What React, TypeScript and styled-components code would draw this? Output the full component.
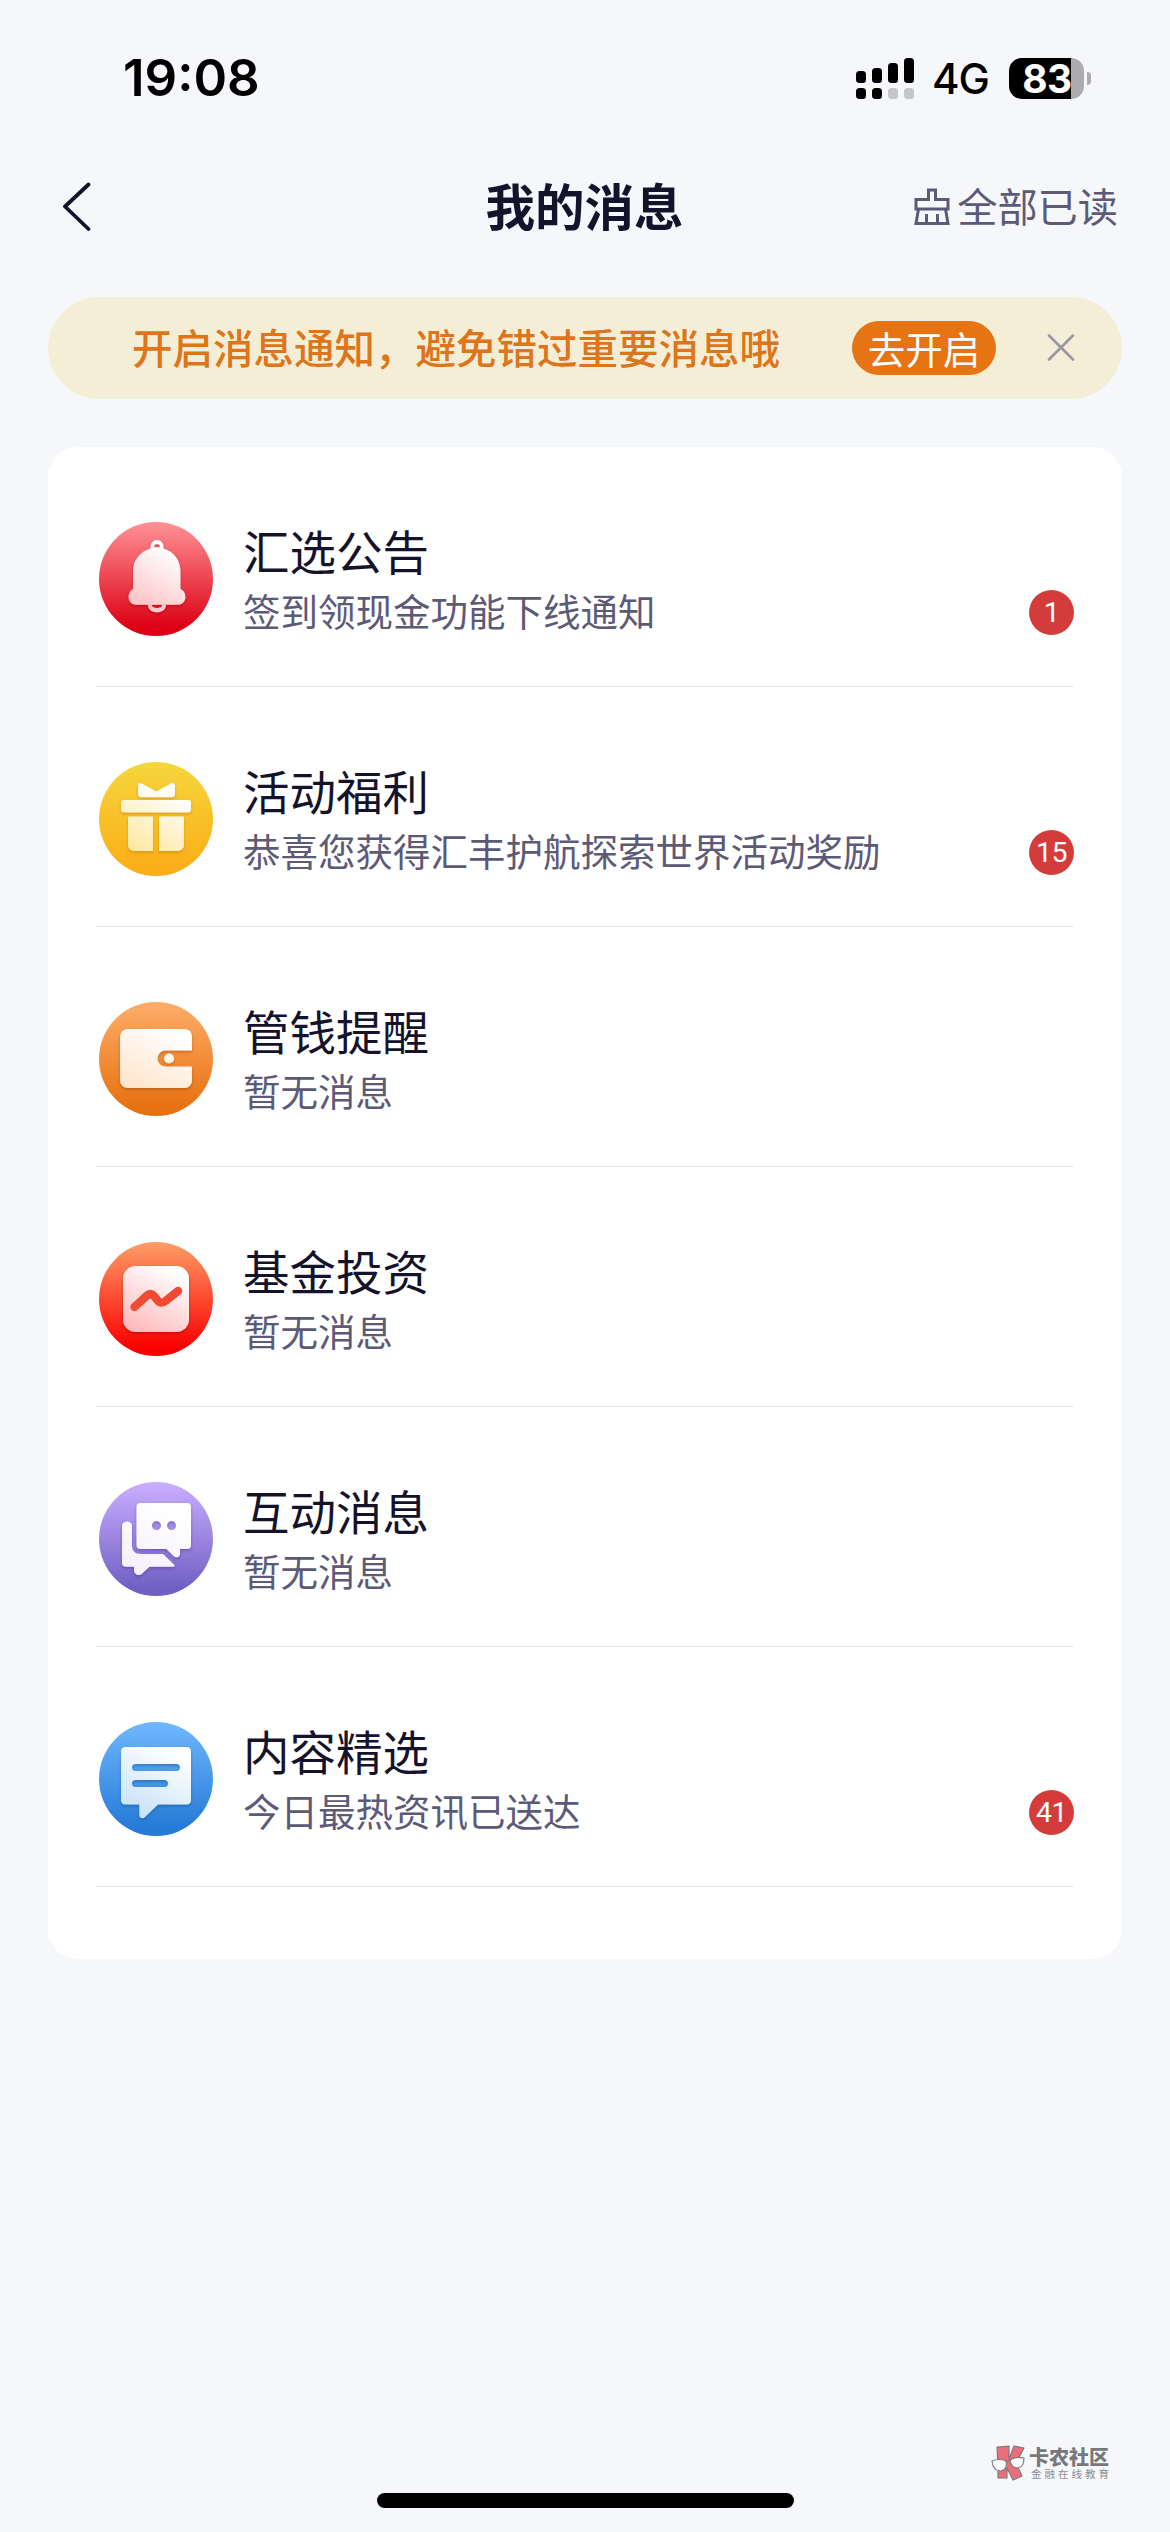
import React from "react";
import styled, { createGlobalStyle } from "styled-components";

const Global = createGlobalStyle`
  *, *::before, *::after { box-sizing: border-box; }
  html, body { margin: 0; padding: 0; background: #f6f7fb; }
  svg { display: block; flex-shrink: 0; }
`;

const CJK = `"Noto Sans CJK SC", sans-serif`;
const LATIN = `Inter, "Liberation Sans", sans-serif`;

const Screen = styled.main`
  width: 1170px;
  height: 2532px;
  display: flex;
  flex-direction: column;
  background: #f6f7fb;
  font-family: ${CJK};
  color: #15132b;
  overflow: hidden;
`;

const StatusBar = styled.header`
  height: 156px;
  display: flex;
  justify-content: space-between;
  align-items: center;
  padding: 0 79px 0 123px;
  font-family: ${LATIN};
  color: #000;
`;

const Clock = styled.time`
  font-size: 51px;
  line-height: 60px;
  font-weight: 600;
  letter-spacing: 0;
  font-feature-settings: "case" 1;
`;

const StatusGroup = styled.div`
  display: flex;
  align-items: center;
`;

const Network = styled.span`
  font-size: 42px;
  line-height: 44px;
  font-weight: 500;
  letter-spacing: -1px;
  margin: 2px 20px 0 18px;
`;

const Battery = styled.div`
  width: 75px;
  height: 41px;
  display: flex;
  align-items: center;
  justify-content: center;
  padding-left: 1px;
  border-radius: 13px;
  background: linear-gradient(90deg, #000 62px, #acacae 62px);
  color: #fff;
  font-size: 39px;
  line-height: 41px;
  font-weight: 700;
  letter-spacing: -0.6px;
`;

const BatteryTip = styled.span`
  width: 4px;
  height: 13px;
  margin-left: 3px;
  border-radius: 0 5px 5px 0;
  background: #acacae;
`;

const NavBar = styled.nav`
  height: 141px;
  display: grid;
  grid-template-columns: 1fr auto 1fr;
  align-items: center;
  padding: 0 52px 40px 62px;
`;

const PageTitle = styled.h1`
  margin: 0 11px 4px 0;
  font-size: 49.5px;
  line-height: 60px;
  font-weight: 700;
`;

const ReadAll = styled.button`
  display: flex;
  align-items: center;
  justify-self: end;
  gap: 7px;
  padding: 0;
  border: 0;
  background: none;
  font-family: ${CJK};
  font-size: 40.2px;
  line-height: 50px;
  color: #5d5a78;
`;

const ReadAllLabel = styled.span`
  margin-bottom: 3px;
`;

const Banner = styled.section`
  height: 102px;
  margin: 0 48px;
  padding: 0 47px 0 84px;
  display: flex;
  align-items: center;
  border-radius: 51px;
  background: #f5eed7;
`;

const BannerText = styled.p`
  margin: 0 0 2px;
  flex: 1;
  font-size: 40.5px;
  line-height: 50px;
  font-weight: 500;
  color: #dd751b;
  white-space: nowrap;
`;

const BannerAction = styled.button`
  width: 144px;
  height: 54px;
  margin: 0 51px 0 0;
  padding: 0;
  border: 0;
  border-radius: 27px;
  background: #e67412;
  color: #fff;
  font-family: ${CJK};
  font-size: 37.5px;
  line-height: 52px;
`;

const Card = styled.ul`
  list-style: none;
  height: 1512px;
  margin: 48px 48px 0;
  padding: 0 48px;
  border-radius: 30px;
  background: #fff;
`;

const Row = styled.li`
  height: 240px;
  display: flex;
  align-items: center;
  padding: 25px 0 0 3px;
  border-bottom: 1px solid #e6e6ea;
`;

const RowBody = styled.div`
  flex: 1;
  display: flex;
  flex-direction: column;
  margin: 2px 0 0 29px;
`;

const RowTitle = styled.h2`
  margin: 0;
  font-size: 46.5px;
  line-height: 60px;
  font-weight: 400;
  color: #15132b;
`;

const RowLine = styled.div`
  display: flex;
  justify-content: space-between;
  align-items: center;
  height: 60px;
`;

const RowText = styled.p`
  margin: 0;
  font-size: 37.5px;
  line-height: 60px;
  color: #5d5a78;
`;

const Badge = styled.span`
  width: 45px;
  height: 45px;
  margin-top: 4px;
  border-radius: 50%;
  display: flex;
  align-items: center;
  justify-content: center;
  background: #d43c3c;
  color: #fff;
  font-family: Roboto, "Liberation Sans", sans-serif;
  font-size: 28.5px;
  font-weight: 400;
  letter-spacing: -0.6px;
  line-height: 45px;
`;

const Footer = styled.footer`
  flex: 1;
  display: flex;
  flex-direction: column;
  justify-content: flex-end;
  align-items: center;
`;

const Watermark = styled.div`
  align-self: flex-end;
  display: flex;
  align-items: center;
  gap: 3px;
  margin: 0 60px 12px 0;
`;

const WatermarkText = styled.div`
  display: flex;
  flex-direction: column;
`;

const WatermarkName = styled.strong`
  font-size: 20px;
  line-height: 21px;
  font-weight: 900;
  color: #77787c;
`;

const WatermarkTag = styled.span`
  padding-left: 2px;
  font-size: 10.5px;
  line-height: 13px;
  letter-spacing: 3px;
  margin-right: -2px;
  color: #8d8e92;
`;

const HomeIndicator = styled.div`
  width: 417px;
  height: 15px;
  margin-bottom: 24px;
  border-radius: 8px;
  background: #000;
`;

const Signal = () => (
  <svg width="58" height="41" viewBox="0 0 58 41">
    {[13, 10, 5, 0].map((top, i) => (
      <g key={top}>
        <rect x={i * 16} y={top} width="10" height={25 - top} rx="3.5" fill="#000" />
        <rect x={i * 16} y="30" width="10" height="11" rx="3.5" fill={i < 2 ? "#000" : "#c4c5c9"} />
      </g>
    ))}
  </svg>
);

const BackIcon = () => (
  <svg width="30" height="50" viewBox="0 0 30 50" fill="none" stroke="#15132b" strokeWidth="3.8" strokeLinecap="round" strokeLinejoin="round">
    <path d="M26.500 2.500 3 24.500l23.500 22.500" />
  </svg>
);

const BrushIcon = () => (
  <svg width="36" height="37" viewBox="0 0 36 37" fill="none" stroke="#5d5a78" strokeWidth="3">
    <path d="M2 11.500h12.500V2h7v9.500H34V21H2z M4.500 21 2 35.500h32L31.500 21 M12.500 26v9 M23.500 26v9" />
  </svg>
);

const CloseIcon = () => (
  <svg width="28" height="28" viewBox="0 0 28 28" fill="none" stroke="#9a96a5" strokeWidth="2.6" strokeLinecap="round">
    <path d="M2 1.500 26 25.500M26 1.500 2 25.500" />
  </svg>
);

type Kind = "bell" | "gift" | "wallet" | "fund" | "chat" | "content";

const palette: Record<Kind, { bg: [string, string]; fg: [string, string]; shade: string }> = {
  bell: { bg: ["#ff8f93", "#dc0014"], fg: ["#ffffff", "#fdc0c3"], shade: "#8c0010" },
  gift: { bg: ["#f6d53c", "#fbae17"], fg: ["#ffffff", "#ffe9a4"], shade: "#b66a00" },
  wallet: { bg: ["#fdac68", "#e7710f"], fg: ["#ffffff", "#ffe5cc"], shade: "#8a3c00" },
  fund: { bg: ["#fd9b66", "#fa0000"], fg: ["#ffffff", "#ffbcbe"], shade: "#900000" },
  chat: { bg: ["#c8adff", "#7160c4"], fg: ["#ffffff", "#f5f0fe"], shade: "#3f2c8e" },
  content: { bg: ["#6fb6fd", "#257bd6"], fg: ["#ffffff", "#cce4f7"], shade: "#0c4684" },
};

const glyphs: Record<Kind, React.ReactNode> = {
  bell: (
    <>
      <path fillRule="evenodd" d="M51.500 26.500V24.500a6.500 6.500 0 0 1 13 0v2C75 29.500 81.500 38.500 81.500 49V67c3 1 5 4.500 5 8 0 4.500-3.500 7.700-7.500 7.700H37c-4 0-7.500-3.200-7.500-7.700 0-3.500 2-7 4.500-8V49C34 38.500 41 29.500 51.500 26.500ZM55 25.300h6c0-4.300-6-4.300-6 0Z" />
      <path d="M49 82.700h3.800c0 4.400 10.400 4.400 10.400 0H67c0 10-18 10-18 0Z" />
    </>
  ),
  gift: (
    <>
      <path d="M39 24c0-3 2-3.800 4.300-2.200L57.500 29.500l13.700-7.700C73.500 20.200 76 21 76 24v8c0 2-1.300 3.200-3.200 3.200H42c-2 0-3-1.200-3-3.200Z" />
      <rect x="22" y="38" width="70" height="12.500" rx="3" />
      <path d="M29 54.500h25V89H35.500c-4 0-6.500-2.500-6.500-6.500ZM60 54.500h25v28c0 4-2.500 6.500-6.500 6.500H60Z" />
    </>
  ),
  wallet: (
    <>
      <path d="M29 27h56.500c4.500 0 7.500 3 7.500 7.500V48.500H67c-11 0-11 16 0 16h26V78c0 4.500-3 8-7.500 8H29c-4.500 0-8-3.500-8-8V35c0-4.500 3.500-8 8-8Z" />
      <circle cx="70" cy="56.500" r="5" />
    </>
  ),
  fund: <rect x="24" y="24" width="66" height="66" rx="12.500" />,
  chat: (
    <>
      <path fillRule="evenodd" d="M41.500 21H88c2.500 0 4 1.500 4 4v38c0 2.500-1.500 4-4 4h-7v4.500c0 4-4 5-6.500 2.500l-7-7H41.500c-2.500 0-4-1.500-4-4V25c0-2.500 1.500-4 4-4ZM57.500 39a4.500 4.500 0 1 0 0 9 4.500 4.500 0 0 0 0-9ZM72.500 39a4.500 4.500 0 1 0 0 9 4.500 4.500 0 0 0 0-9Z" />
      <path d="M23 44c0-6 10-6 10 0V63c0 6 3 9 9 9h22L75 82.500c1 1 .5 2.300-1 2.300H50.500l-7.500 7c-3 2.500-8 1.200-8-3.500v-3.500h-8c-2.500 0-4-1.500-4-4Z" />
    </>
  ),
  content: (
    <path fillRule="evenodd" d="M26.500 25h61c3 0 4.500 1.700 4.500 4.500V78c0 2.800-1.500 4.500-4.500 4.500H59L46 95c-2.500 2.300-5.700 1-5.700-2.300V82.500H26.500c-3 0-4.500-1.700-4.500-4.500V29.500c0-2.800 1.500-4.500 4.500-4.500ZM36.500 42a3.500 3.500 0 0 0 0 7h41a3.500 3.500 0 0 0 0-7ZM36.500 58a3.500 3.500 0 0 0 0 7h29a3.500 3.500 0 0 0 0-7Z" />
  ),
};

const CategoryIcon = ({ kind }: { kind: Kind }) => {
  const { bg, fg, shade } = palette[kind];
  return (
    <svg width="115" height="114" viewBox="0 0 115 114">
      <defs>
        <linearGradient id={`${kind}-bg`} x1="0" y1="0" x2="0" y2="1">
          <stop offset="0.02" stopColor={bg[0]} />
          <stop offset="0.93" stopColor={bg[1]} />
        </linearGradient>
        <linearGradient id={`${kind}-fg`} gradientUnits="userSpaceOnUse" x1="72" y1="28" x2="40" y2="88">
          <stop offset="0" stopColor={fg[0]} />
          <stop offset="1" stopColor={fg[1]} />
        </linearGradient>
        <filter id={`${kind}-shadow`} x="-20%" y="-20%" width="140%" height="150%">
          <feDropShadow dx="0" dy="1.8" stdDeviation="1.6" floodColor={shade} floodOpacity="0.42" />
        </filter>
      </defs>
      <circle cx="57" cy="57" r="57" fill={`url(#${kind}-bg)`} />
      <g fill={`url(#${kind}-fg)`} filter={`url(#${kind}-shadow)`}>{glyphs[kind]}</g>
      {kind === "fund" && (
        <path d="M35.500 65 47.500 54q4-3.500 7.500 0l4 5q3.500 3 7.500 0L79 49" fill="none" stroke="#f04a34" strokeWidth="8.400" strokeLinecap="round" strokeLinejoin="round" />
      )}
    </svg>
  );
};

const WatermarkLogo = () => (
  <svg width="35" height="36" viewBox="0 0 35 36" stroke="#77787c" strokeWidth="1.100" strokeLinejoin="round">
    <path d="M6 2 18 1v13L23 1l10 2-8 15 6 13-9 4-6-12v10H7V22Z" fill="#ea6f7b" />
    <path d="M1 16q7-3 14 0 2 8-5 10-8 0-9-10ZM19 15q6-4 14-2 0 9-6 10-7 0-8-8Z" fill="#fbfbfd" />
    <path d="M15 17q2-2 4-1" fill="none" />
  </svg>
);

const messages: { kind: Kind; title: string; text: string; count?: number }[] = [
  { kind: "bell", title: "汇选公告", text: "签到领现金功能下线通知", count: 1 },
  { kind: "gift", title: "活动福利", text: "恭喜您获得汇丰护航探索世界活动奖励", count: 15 },
  { kind: "wallet", title: "管钱提醒", text: "暂无消息" },
  { kind: "fund", title: "基金投资", text: "暂无消息" },
  { kind: "chat", title: "互动消息", text: "暂无消息" },
  { kind: "content", title: "内容精选", text: "今日最热资讯已送达", count: 41 },
];

export default function App() {
  return (
    <Screen>
      <Global />
      <StatusBar>
        <Clock>19:08</Clock>
        <StatusGroup>
          <Signal />
          <Network>4G</Network>
          <Battery>83</Battery>
          <BatteryTip />
        </StatusGroup>
      </StatusBar>
      <NavBar>
        <BackIcon />
        <PageTitle>我的消息</PageTitle>
        <ReadAll>
          <BrushIcon />
          <ReadAllLabel>全部已读</ReadAllLabel>
        </ReadAll>
      </NavBar>
      <Banner>
        <BannerText>开启消息通知，避免错过重要消息哦</BannerText>
        <BannerAction>去开启</BannerAction>
        <CloseIcon />
      </Banner>
      <Card>
        {messages.map((m) => (
          <Row key={m.kind}>
            <CategoryIcon kind={m.kind} />
            <RowBody>
              <RowTitle>{m.title}</RowTitle>
              <RowLine>
                <RowText>{m.text}</RowText>
                {m.count !== undefined && <Badge>{m.count}</Badge>}
              </RowLine>
            </RowBody>
          </Row>
        ))}
      </Card>
      <Footer>
        <Watermark>
          <WatermarkLogo />
          <WatermarkText>
            <WatermarkName>卡农社区</WatermarkName>
            <WatermarkTag>金融在线教育</WatermarkTag>
          </WatermarkText>
        </Watermark>
        <HomeIndicator />
      </Footer>
    </Screen>
  );
}
